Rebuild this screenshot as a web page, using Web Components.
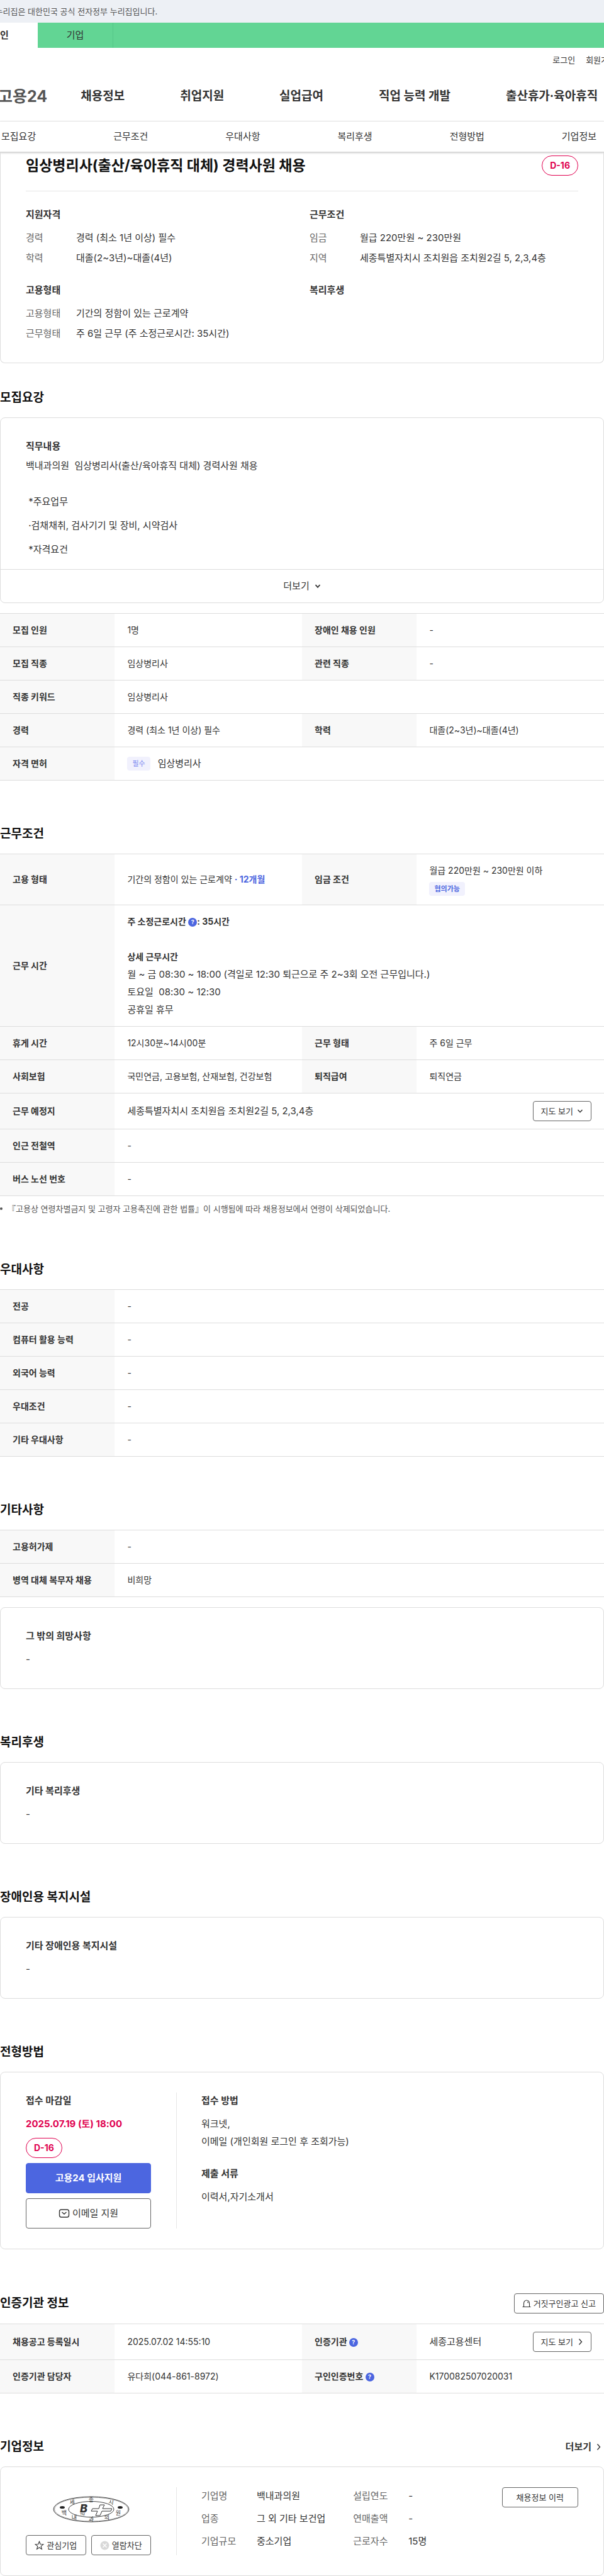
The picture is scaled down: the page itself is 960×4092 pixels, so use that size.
<!DOCTYPE html>
<html lang="ko">
<head>
<meta charset="utf-8">
<meta name="viewport" content="width=device-width, initial-scale=1">
<title>임상병리사(출산/육아휴직 대체) 경력사원 채용 - 고용24</title>
<style>
  html {
    overflow-x: hidden;
  }
  body {
    margin: 0;
    overflow-x: hidden;
    background: #fff;
    color: #333;
    font-family: Inter, "Noto Sans CJK KR", sans-serif;
    font-size: 15px;
    line-height: 28px;
    --line: #ddd;
    --blue: #4c66e0;
    --pink: #e0004f;
  }
  p, h1, h3 {
    margin: 0;
  }
  h3 {
    font-size: 15px;
    line-height: 26px;
    font-weight: 700;
  }
  .title-row {
    display: flex;
    justify-content: space-between;
    align-items: center;
    padding: 5px 0 24px;
    border-bottom: 1px solid #e6e6e6;
  }
  .title-row h1 {
    font-size: 23px;
    line-height: 32px;
    color: #111;
  }
  .summary {
    display: grid;
    grid-template-columns: 1fr 1fr;
    gap: 24px;
    padding-top: 24px;
  }
  .summary def-list {
    margin-top: 10px;
  }
  .lead {
    margin-top: 4px;
    white-space: pre-wrap;
  }
  .duties {
    padding-top: 24px;
    line-height: 38px;
    white-space: pre-wrap;
  }
  .gap-top {
    margin-top: 10px;
  }
  .note {
    display: flex;
    align-items: center;
    gap: 8px;
    margin-top: 8px;
    font-size: 13px;
    line-height: 24px;
    color: #555;
  }
  .note::before {
    content: '';
    width: 4px;
    height: 4px;
    border-radius: 2px;
    background: #555;
  }
  .block {
    margin-top: 16px;
  }
  .apply {
    display: flex;
    flex-direction: column;
    gap: 8px;
  }
  .deadline {
    margin-top: 2px;
    color: var(--pink);
    font-weight: 700;
  }
  .method h3 + p {
    margin-top: 10px;
  }
  .method p + h3 {
    margin-top: 24px;
  }
  .company {
    display: flex;
    justify-content: space-between;
    align-items: flex-start;
  }
  .company-lists {
    display: flex;
    gap: 44px;
  }
  .company-side {
    display: flex;
    flex-direction: column;
  }
  .company-side company-logo {
    align-self: center;
    padding: 14px 0 20px 8px;
  }
  .pair {
    display: grid;
    grid-template-columns: 1fr 1fr;
    gap: 8px;
  }
</style>
</head>
<body>

<site-header></site-header>
<section-nav></section-nav>

<main>
  <content-card attached>
    <div class="title-row">
      <h1>임상병리사(출산/육아휴직 대체) 경력사원 채용</h1>
      <dday-badge>D-16</dday-badge>
    </div>
    <div class="summary">
      <section>
        <h3>지원자격</h3>
        <def-list id="qualification"></def-list>
      </section>
      <section>
        <h3>근무조건</h3>
        <def-list id="condition"></def-list>
      </section>
      <section>
        <h3>고용형태</h3>
        <def-list id="employment"></def-list>
      </section>
      <section>
        <h3>복리후생</h3>
      </section>
    </div>
  </content-card>

  <page-section id="recruit" heading="모집요강" near>
    <content-card more="더보기">
      <h3>직무내용</h3>
      <p class="lead">백내과의원  임상병리사(출산/육아휴직 대체) 경력사원 채용</p>
      <div class="duties"> *주요업무
 ·검채채취, 검사기기 및 장비, 시약검사
 *자격요건</div>
    </content-card>
    <info-table class="block" id="recruit-table"></info-table>
  </page-section>

  <page-section id="work" heading="근무조건">
    <info-table id="work-table"></info-table>
    <p class="note">『고용상 연령차별금지 및 고령자 고용촉진에 관한 법률』이 시행됨에 따라 채용정보에서 연령이 삭제되었습니다.</p>
  </page-section>

  <page-section id="prefer" heading="우대사항">
    <info-table id="prefer-table"></info-table>
  </page-section>

  <page-section heading="기타사항">
    <info-table id="etc-table"></info-table>
    <content-card class="block">
      <h3>그 밖의 희망사항</h3>
      <p class="gap-top">-</p>
    </content-card>
  </page-section>

  <page-section id="welfare" heading="복리후생">
    <content-card>
      <h3>기타 복리후생</h3>
      <p class="gap-top">-</p>
    </content-card>
  </page-section>

  <page-section heading="장애인용 복지시설">
    <content-card>
      <h3>기타 장애인용 복지시설</h3>
      <p class="gap-top">-</p>
    </content-card>
  </page-section>

  <page-section id="process" heading="전형방법">
    <content-card>
      <split-panel>
        <div slot="side" class="apply">
          <h3>접수 마감일</h3>
          <p class="deadline">2025.07.19 (토) 18:00</p>
          <dday-badge>D-16</dday-badge>
          <line-button size="large" kind="primary">고용24 입사지원</line-button>
          <line-button size="large" icon="mail">이메일 지원</line-button>
        </div>
        <div class="method">
          <h3>접수 방법</h3>
          <p>워크넷,<br>이메일 (개인회원 로그인 후 조회가능)</p>
          <h3>제출 서류</h3>
          <p>이력서,자기소개서</p>
        </div>
      </split-panel>
    </content-card>
  </page-section>

  <page-section heading="인증기관 정보">
    <line-button slot="action" icon="siren">거짓구인광고 신고</line-button>
    <info-table id="agency-table"></info-table>
  </page-section>

  <page-section id="company" heading="기업정보">
    <more-link slot="action">더보기</more-link>
    <content-card>
      <split-panel>
        <div slot="side" class="company-side">
          <company-logo></company-logo>
          <div class="pair">
            <line-button icon="star">관심기업</line-button>
            <line-button icon="block">열람차단</line-button>
          </div>
        </div>
        <div class="company">
          <div class="company-lists">
            <def-list id="company-main" loose></def-list>
            <def-list id="company-sub" loose></def-list>
          </div>
          <line-button wide>채용정보 이력</line-button>
        </div>
      </split-panel>
    </content-card>
  </page-section>
</main>

<script>
'use strict';

const kIcons = {
  down: '<svg width="10" height="10" viewBox="0 0 10 10"><path d="M1.5 3 5 6.8 8.5 3"/></svg>',
  right: '<svg width="10" height="12" viewBox="-2 0 10 12"><path d="M1.5 1.5 5.5 6l-4 4.5"/></svg>',
  mail: '<svg width="18" height="14" viewBox="0 0 18 14"><rect x="1.5" y="1" width="15" height="12" rx="3"/><path d="m5.5 5 3.5 3 3.5-3"/></svg>',
  siren: '<svg width="14" height="14" viewBox="0 0 14 14"><path d="M2.5 12V7a4.5 5 0 0 1 9 0v5M.5 12.5h13M9.5 6.5A2.5 2.5 0 0 0 8 4.5" stroke-width="1.1"/></svg>',
  star: '<svg width="15" height="15" viewBox="0 0 15 15"><path d="m7.5 1.2 1.7 4.3 4.5.3-3.5 2.9 1.2 4.5-3.9-2.5-3.9 2.5 1.2-4.5-3.5-2.9 4.5-.3z" stroke-width="1.1"/></svg>',
  block: '<svg width="15" height="15" viewBox="0 0 15 15"><circle cx="7.5" cy="7.5" r="7" fill="#d8d8d8" stroke="none"/><path d="m4.5 4.5 6 6m0-6-6 6" stroke="#fff"/></svg>',
};

// Attaches an open shadow root that holds the given styles and markup.
class BaseElement extends HTMLElement {
  constructor() {
    super();
    this.attachShadow({ mode: 'open' });
  }

  connectedCallback() {
    this.draw();
  }

  render(css, html) {
    this.shadowRoot.innerHTML = `<style>${css}</style>${html}`;
  }
}

class SiteHeader extends BaseElement {
  draw() {
    this.render(`
      :host {
        display: block;
        overflow: hidden;
        white-space: nowrap;
      }
      a {
        color: inherit;
        text-decoration: none;
      }
      .banner {
        background: #edf0f5;
        font-size: 13px;
        line-height: 36px;
        color: #555;
      }
      .banner p {
        margin: 0 0 0 -23px;
      }
      .tabs {
        display: flex;
        background: #62d594;
        line-height: 40px;
      }
      .tabs div {
        display: flex;
        margin-left: -60px;
      }
      .tabs a {
        box-sizing: border-box;
        width: 120px;
        text-align: center;
        border-right: 1px solid #55c788;
      }
      .tabs a.on {
        background: #fff;
        font-weight: 700;
        border: 0;
      }
      .util {
        display: flex;
        justify-content: flex-end;
        gap: 17px;
        margin-right: -19px;
        font-size: 13px;
        line-height: 38px;
      }
      .menu {
        display: flex;
        align-items: center;
        gap: 88px;
        height: 78px;
        border-bottom: 1px solid #e8e8e8;
        font-size: 19px;
        font-weight: 700;
      }
      .logo {
        margin: 0 -35px 0 -3px;
        font-size: 25px;
        color: #555;
      }
    `, `
      <div class="banner"><p>이 누리집은 대한민국 공식 전자정부 누리집입니다.</p></div>
      <div class="tabs"><div><a class="on" href="#">개인</a><a href="#">기업</a></div></div>
      <div class="util"><a href="#">로그인</a><a href="#">회원가입</a></div>
      <nav class="menu">
        <a class="logo" href="#">고용24</a>
        <a href="#">채용정보</a>
        <a href="#">취업지원</a>
        <a href="#">실업급여</a>
        <a href="#">직업 능력 개발</a>
        <a href="#">출산휴가·육아휴직</a>
      </nav>
    `);
  }
}

class SectionNav extends BaseElement {
  draw() {
    this.render(`
      :host {
        display: block;
      }
      nav {
        display: flex;
        justify-content: space-between;
        padding: 0 12px 0 2px;
        line-height: 48px;
        border-bottom: 1px solid #d0d0d0;
        box-shadow: 0 1px 3px rgba(0, 0, 0, 0.2);
      }
      a {
        color: inherit;
        text-decoration: none;
      }
    `, `
      <nav>
        <a href="#recruit">모집요강</a>
        <a href="#work">근무조건</a>
        <a href="#prefer">우대사항</a>
        <a href="#welfare">복리후생</a>
        <a href="#process">전형방법</a>
        <a href="#company">기업정보</a>
      </nav>
    `);
  }
}

// A headed section, with an optional control at the right of the heading.
class PageSection extends BaseElement {
  draw() {
    this.render(`
      :host {
        display: block;
        margin-top: 70px;
      }
      :host([near]) {
        margin-top: 40px;
      }
      header {
        display: flex;
        justify-content: space-between;
        align-items: center;
        margin-bottom: 16px;
      }
      h2 {
        margin: 0;
        font-size: 19px;
        line-height: 30px;
        color: #111;
      }
    `, `
      <header><h2>${this.getAttribute('heading')}</h2><slot name="action"></slot></header>
      <slot></slot>
    `);
  }
}

// Rounded box. "attached" drops the top edge, "more" adds a button at the foot.
class ContentCard extends BaseElement {
  draw() {
    let more = this.getAttribute('more');
    this.render(`
      :host {
        display: block;
        border: 1px solid var(--line);
        border-radius: 8px;
      }
      :host([attached]) {
        border-top: 0;
        border-radius: 0 0 8px 8px;
      }
      .body {
        padding: 32px 40px;
      }
      :host([attached]) .body {
        padding-top: 0;
      }
      :host([more]) .body {
        padding-bottom: 12px;
      }
      button {
        display: flex;
        justify-content: center;
        align-items: center;
        gap: 8px;
        width: 100%;
        height: 53px;
        border: 0;
        border-top: 1px solid var(--line);
        background: none;
        color: inherit;
        font: inherit;
      }
      svg {
        fill: none;
        stroke: currentColor;
        stroke-width: 1.8;
      }
    `, `
      <div class="body"><slot></slot></div>
      ${more ? `<button type="button">${more}${kIcons.down}</button>` : ''}
    `);
  }
}

class SplitPanel extends BaseElement {
  draw() {
    this.render(`
      :host {
        display: grid;
        grid-template-columns: 199px 1fr;
        gap: 80px;
      }
      .main {
        position: relative;
      }
      .main::before {
        content: '';
        position: absolute;
        left: -40px;
        top: 0;
        bottom: 0;
        border-left: 1px solid #e6e6e6;
      }
    `, `
      <slot name="side"></slot>
      <div class="main"><slot></slot></div>
    `);
  }
}

class DdayBadge extends BaseElement {
  draw() {
    this.render(`
      :host {
        align-self: flex-start;
        box-sizing: border-box;
        height: 32px;
        padding: 0 12px;
        border: 1px solid var(--pink);
        border-radius: 16px;
        color: var(--pink);
        font-size: 14px;
        line-height: 30px;
        font-weight: 700;
      }
    `, '<slot></slot>');
  }
}

class TagLabel extends BaseElement {
  draw() {
    this.render(`
      :host {
        display: inline-block;
        padding: 0 8px;
        border-radius: 4px;
        background: #f1f1fd;
        color: #7a88f0;
        font-size: 11px;
        line-height: 22px;
      }
      :host([strong]) {
        color: var(--blue);
        font-weight: 700;
      }
    `, '<slot></slot>');
  }
}

class HelpTip extends BaseElement {
  draw() {
    this.render(`
      :host {
        display: inline-block;
        vertical-align: middle;
        line-height: 14px;
      }
      button {
        display: block;
        width: 14px;
        height: 14px;
        padding: 0;
        border: 0;
        border-radius: 50%;
        background: var(--blue);
        color: #fff;
        font: 700 9px/14px Inter, sans-serif;
      }
    `, '<button type="button">?</button>');
  }
}

class LineButton extends BaseElement {
  draw() {
    let icon = this.getAttribute('icon');
    let after = this.getAttribute('icon-after');
    this.render(`
      :host {
        display: block;
      }
      button {
        display: flex;
        justify-content: center;
        align-items: center;
        gap: 4px;
        box-sizing: border-box;
        width: 100%;
        height: 32px;
        padding: 0 12px;
        border: 1px solid #666;
        border-radius: 4px;
        background: #fff;
        color: #333;
        font: inherit;
        font-size: 13px;
        white-space: nowrap;
      }
      :host([icon-after]) button {
        gap: 6px;
      }
      :host([wide]) button {
        padding: 0 22px;
      }
      :host([size="large"]) button {
        height: 48px;
        font-size: 15px;
      }
      :host([kind="primary"]) button {
        border-color: var(--blue);
        background: var(--blue);
        color: #fff;
        font-weight: 700;
      }
      svg {
        flex: none;
        fill: none;
        stroke: currentColor;
        stroke-width: 1.4;
      }
    `, `
      <button type="button">${icon ? kIcons[icon] : ''}<slot></slot>${after ? kIcons[after] : ''}</button>
    `);
  }
}

class MoreLink extends BaseElement {
  draw() {
    this.render(`
      a {
        display: flex;
        align-items: center;
        gap: 6px;
        padding-right: 4px;
        color: inherit;
        font-weight: 700;
        text-decoration: none;
      }
      svg {
        fill: none;
        stroke: currentColor;
        stroke-width: 1.4;
      }
    `, `<a href="#"><slot></slot>${kIcons.right}</a>`);
  }
}

class DefList extends BaseElement {
  set items(list) {
    this._items = list;
    this.draw();
  }

  draw() {
    this.render(`
      :host {
        display: block;
      }
      dl {
        display: grid;
        grid-template-columns: 80px auto;
        justify-content: start;
        gap: 4px 0;
        margin: 0;
      }
      :host([loose]) dl {
        grid-template-columns: 88px auto;
        gap: 8px 0;
      }
      dt {
        color: #666;
      }
      dd {
        margin: 0;
      }
    `, `<dl>${(this._items || []).map((i) => `<dt>${i[0]}</dt><dd>${i[1]}</dd>`).join('')}</dl>`);
  }
}

// Each row is [label, value] or [label, value, label, value].
class InfoTable extends BaseElement {
  set rows(list) {
    this._rows = list;
    this.draw();
  }

  draw() {
    let rows = (this._rows || []).map((r) => {
      let cells = '';
      for (let i = 0; i < r.length; i += 2) {
        let span = r.length == 2 ? ' colspan="3"' : '';
        cells += `<th scope="row">${r[i]}</th><td${span}>${r[i + 1]}</td>`;
      }
      return `<tr>${cells}</tr>`;
    });
    this.render(`
      :host {
        display: block;
      }
      table {
        width: 100%;
        table-layout: fixed;
        border-spacing: 0;
        border-top: 1px solid var(--line);
        font-size: 14px;
        line-height: 28px;
      }
      .label {
        width: 19%;
      }
      th, td {
        padding: 12px 20px;
        border-bottom: 1px solid var(--line);
        text-align: left;
        vertical-align: middle;
      }
      th {
        background: #f8f8f8;
        font-weight: 700;
      }
      p {
        margin: 0;
        font-size: 15px;
        white-space: pre-wrap;
      }
      b {
        display: block;
      }
      em {
        color: var(--blue);
        font-style: normal;
        font-weight: 700;
      }
      .push {
        margin-top: 28px;
      }
      .row {
        display: flex;
        justify-content: space-between;
        align-items: center;
      }
      .tagged {
        display: flex;
        align-items: center;
        gap: 12px;
      }
    `, `
      <table>
        <colgroup><col class="label"><col><col class="label"><col></colgroup>
        <tbody>${rows.join('')}</tbody>
      </table>
    `);
  }
}

class CompanyLogo extends BaseElement {
  draw() {
    this.render(`
      :host {
        display: block;
        line-height: 0;
      }
      text {
        fill: #333;
        font-size: 9px;
        text-anchor: middle;
      }
      .mark {
        font: italic 800 18px Inter, sans-serif;
      }
      .tm {
        font-size: 5px;
      }
    `, `
      <svg width="122" height="42" viewBox="-61 -21 122 42" role="img" aria-label="백내과의원">
        <g fill="none" stroke="#444">
          <ellipse rx="60" ry="20"/>
          <ellipse rx="58.5" ry="19" stroke-width=".5"/>
          <ellipse rx="36" ry="12.5"/>
        </g>
        <text x="-30" y="-8" transform="rotate(-8 -30 -8)">세</text>
        <text x="0" y="-12">종</text>
        <text x="31" y="-8" transform="rotate(8 31 -8)">시</text>
        <ellipse cx="-46" cy="-3" rx="4" ry="2" fill="#222"/>
        <ellipse cx="46" cy="-3" rx="4" ry="2" fill="#222"/>
        <text x="-43" y="9">백</text>
        <text x="-27" y="16">내</text>
        <text x="0" y="19">과</text>
        <text x="25" y="16">의</text>
        <text x="43" y="9">원</text>
        <text class="mark" x="-12" y="5">B</text>
        <text class="tm" x="-14" y="10">TM</text>
        <path d="M14-7h7l-3 6h15l-2 4H17l-3 7H7l3-7H0l2-4h10z" fill="#fff" stroke="#333"/>
      </svg>
    `);
  }
}

window.customElements.define('site-header', SiteHeader);
window.customElements.define('section-nav', SectionNav);
window.customElements.define('page-section', PageSection);
window.customElements.define('content-card', ContentCard);
window.customElements.define('split-panel', SplitPanel);
window.customElements.define('dday-badge', DdayBadge);
window.customElements.define('tag-label', TagLabel);
window.customElements.define('help-tip', HelpTip);
window.customElements.define('line-button', LineButton);
window.customElements.define('more-link', MoreLink);
window.customElements.define('def-list', DefList);
window.customElements.define('info-table', InfoTable);
window.customElements.define('company-logo', CompanyLogo);

const byId = (id) => document.getElementById(id);

byId('qualification').items = [['경력', '경력 (최소 1년 이상) 필수'], ['학력', '대졸(2~3년)~대졸(4년)']];
byId('condition').items = [['임금', '월급 220만원 ~ 230만원'], ['지역', '세종특별자치시 조치원읍 조치원2길 5, 2,3,4층']];
byId('employment').items = [['고용형태', '기간의 정함이 있는 근로계약'], ['근무형태', '주 6일 근무 (주 소정근로시간: 35시간)']];

byId('recruit-table').rows = [
  ['모집 인원', '1명', '장애인 채용 인원', '-'],
  ['모집 직종', '임상병리사', '관련 직종', '-'],
  ['직종 키워드', '임상병리사'],
  ['경력', '경력 (최소 1년 이상) 필수', '학력', '대졸(2~3년)~대졸(4년)'],
  ['자격 면허', '<div class="tagged"><tag-label>필수</tag-label><p>임상병리사</p></div>'],
];

byId('work-table').rows = [
  ['고용 형태', '기간의 정함이 있는 근로계약 <em>· 12개월</em>',
    '임금 조건', '월급 220만원 ~ 230만원 이하<br><tag-label strong>협의가능</tag-label>'],
  ['근무 시간', '<b>주 소정근로시간 <help-tip></help-tip>: 35시간</b><b class="push">상세 근무시간</b>' +
    '<p>월 ~ 금 08:30 ~ 18:00 (격일로 12:30 퇴근으로 주 2~3회 오전 근무입니다.)\n토요일  08:30 ~ 12:30\n공휴일 휴무</p>'],
  ['휴게 시간', '12시30분~14시00분', '근무 형태', '주 6일 근무'],
  ['사회보험', '국민연금, 고용보험, 산재보험, 건강보험', '퇴직급여', '퇴직연금'],
  ['근무 예정지', '<div class="row"><p>세종특별자치시 조치원읍 조치원2길 5, 2,3,4층</p>' +
    '<line-button icon-after="down">지도 보기</line-button></div>'],
  ['인근 전철역', '-'],
  ['버스 노선 번호', '-'],
];

byId('prefer-table').rows = [
  ['전공', '-'],
  ['컴퓨터 활용 능력', '-'],
  ['외국어 능력', '-'],
  ['우대조건', '-'],
  ['기타 우대사항', '-'],
];

byId('etc-table').rows = [
  ['고용허가제', '-'],
  ['병역 대체 복무자 채용', '비희망'],
];

byId('agency-table').rows = [
  ['채용공고 등록일시', '2025.07.02 14:55:10', '인증기관 <help-tip></help-tip>',
    '<div class="row"><p>세종고용센터</p><line-button icon-after="right">지도 보기</line-button></div>'],
  ['인증기관 담당자', '유다희(044-861-8972)', '구인인증번호 <help-tip></help-tip>', 'K170082507020031'],
];

byId('company-main').items = [['기업명', '백내과의원'], ['업종', '그 외 기타 보건업'], ['기업규모', '중소기업']];
byId('company-sub').items = [['설립연도', '-'], ['연매출액', '-'], ['근로자수', '15명']];
</script>
</body>
</html>
